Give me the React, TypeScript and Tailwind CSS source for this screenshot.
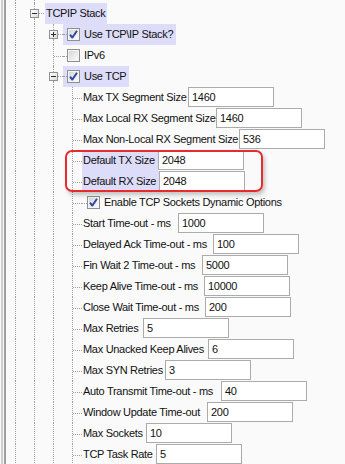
import type { ReactNode } from "react";

type Cell = "line" | "tee" | "exp-minus" | "exp-plus";

const dot = "border-dotted border-[#a0a0a0]";

function Guide({ kind }: { kind: Cell }) {
  if (kind === "line")
    return (
      <div className="w-[19px] h-full shrink-0">
        <div className={`ml-[9px] h-full border-l ${dot}`} />
      </div>
    );
  if (kind === "tee")
    return (
      <div className="w-[19px] h-full shrink-0 flex">
        <div className="w-[9px] shrink-0" />
        <div className={`h-full flex-1 border-l ${dot} flex items-center`}>
          <div className={`w-full border-t ${dot} mt-[1px]`} />
        </div>
      </div>
    );
  // expander box with line above and below
  return (
    <div className="w-[19px] h-full shrink-0 flex flex-col">
      <div className={`ml-[9px] h-[6px] border-l ${dot}`} />
      <div className="flex items-center h-[9px]">
        <div className="ml-[5px] w-[9px] h-[9px] border border-[#919191] bg-gradient-to-br from-white to-[#dcdcdc] relative flex items-center justify-center">
          <div className="w-[5px] h-[1px] bg-[#2d2d2d]" />
          {kind === "exp-plus" && <div className="absolute w-[1px] h-[5px] bg-[#2d2d2d]" />}
        </div>
        <div className={`flex-1 border-t ${dot}`} />
      </div>
      <div className={`ml-[9px] flex-1 border-l ${dot}`} />
    </div>
  );
}

function Check({ on }: { on: boolean }) {
  return (
    <svg width="13" height="13" viewBox="0 0 13 13" className="shrink-0">
      <defs>
        <linearGradient id="cbg" x1="0" y1="0" x2="1" y2="1">
          <stop offset="0" stopColor="#d6d6d6" />
          <stop offset="1" stopColor="#fbfbfb" />
        </linearGradient>
      </defs>
      <rect x="0.5" y="0.5" width="12" height="12" fill="#f4f4f4" stroke="#8e8f8f" />
      <rect x="2" y="2" width="9" height="9" fill="url(#cbg)" />
      {on && (
        <path d="M3 6.6 L5.3 9.6 L10 2.8" fill="none" stroke="#2f46a3" strokeWidth="1.9" strokeLinejoin="round" />
      )}
    </svg>
  );
}

function Row({ cells, children }: { cells: Cell[]; children?: ReactNode }) {
  return (
    <div className="flex h-[21px] items-stretch">
      {cells.map((c, i) => (
        <Guide key={i} kind={c} />
      ))}
      {children}
    </div>
  );
}

// w = width of the label column, so the box lands where the dialog put it
function Field({ label, value, w, hl }: { label: string; value: string; w: number; hl?: boolean }) {
  return (
    <Row cells={["line", "line", "line", "tee"]}>
      <div
        className={`h-full flex items-center shrink-0 pl-[1px] whitespace-nowrap ${hl ? "bg-[#dddcf9]" : ""}`}
        style={{ width: w }}
      >
        {label}
      </div>
      <div className="w-[86px] h-[20px] shrink-0 border border-[#ababab] bg-white flex items-center pl-[3px]">
        {value}
      </div>
    </Row>
  );
}

const before: [string, string, number][] = [
  ["Max TX Segment Size", "1460", 106],
  ["Max Local RX Segment Size", "1460", 134],
  ["Max Non-Local RX Segment Size", "536", 157],
];

const after: [string, string, number][] = [
  ["Start Time-out - ms", "1000", 96],
  ["Delayed Ack Time-out - ms", "100", 131],
  ["Fin Wait 2 Time-out - ms", "5000", 120],
  ["Keep Alive Time-out - ms", "10000", 122],
  ["Close Wait Time-out - ms", "200", 123],
  ["Max Retries", "5", 61],
  ["Max Unacked Keep Alives", "6", 126],
  ["Max SYN Retries", "3", 83],
  ["Auto Transmit Time-out - ms", "40", 139],
  ["Window Update Time-out", "200", 125],
  ["Max Sockets", "10", 64],
  ["TCP Task Rate", "5", 74],
];

export default function App() {
  return (
    <div className="w-[345px] h-[464px] overflow-hidden bg-[#fafafa] flex text-[11px] tracking-[-0.3px] text-[#111] font-['Liberation_Sans',Arial,sans-serif]">
      {/* panel edge */}
      <div className="w-[6px] shrink-0 flex">
        <div className="ml-[1px] w-[2px] bg-[#cdcdcd]" />
        <div className="ml-[1px] w-[2px] bg-[#9e9e9e]" />
      </div>

      <div className="relative flex-1 min-w-0">
        <div className="flex h-[3px]">
          <Guide kind="line" />
          <Guide kind="line" />
        </div>

        {/* TCPIP Stack */}
        <Row cells={["line", "exp-minus"]}>
          <div className="h-full flex items-center ml-[1px] pl-[1px] pr-[2px] bg-[#dddcf9]">TCPIP Stack</div>
        </Row>

        <Row cells={["line", "line", "exp-plus"]}>
          <div className="h-full flex items-center bg-[#dddcf9] pr-[3px]">
            <div className={`w-[4px] border-t ${dot}`} />
            <Check on />
            <span className="ml-[4px]">Use TCP\IP Stack?</span>
          </div>
        </Row>

        <Row cells={["line", "line", "tee"]}>
          <div className="h-full flex items-center">
            <div className={`w-[4px] border-t ${dot} mt-[1px]`} />
            <Check on={false} />
            <span className="ml-[4px]">IPv6</span>
          </div>
        </Row>

        <Row cells={["line", "line", "exp-minus"]}>
          <div className="h-full flex items-center bg-[#dddcf9] pr-[3px]">
            <div className={`w-[4px] border-t ${dot}`} />
            <Check on />
            <span className="ml-[4px]">Use TCP</span>
          </div>
        </Row>

        {before.map(([l, v, w]) => (
          <Field key={l} label={l} value={v} w={w} />
        ))}
        <Field label="Default TX Size" value="2048" w={76} hl />
        <Field label="Default RX Size" value="2048" w={77} hl />

        <Row cells={["line", "line", "line", "tee"]}>
          <div className="h-full flex items-center">
            <div className={`w-[5px] border-t ${dot} mt-[1px]`} />
            <Check on />
            <span className="ml-[4px] whitespace-nowrap">Enable TCP Sockets Dynamic Options</span>
          </div>
        </Row>

        {after.map(([l, v, w]) => (
          <Field key={l} label={l} value={v} w={w} />
        ))}

        {/* red callout */}
        <div className="absolute left-[59px] top-[150px] w-[198px] h-[42px] border-2 border-[#e62a2e] rounded-[7px] shadow-[2px_3px_4px_rgba(0,0,0,0.22)]" />
      </div>
    </div>
  );
}
